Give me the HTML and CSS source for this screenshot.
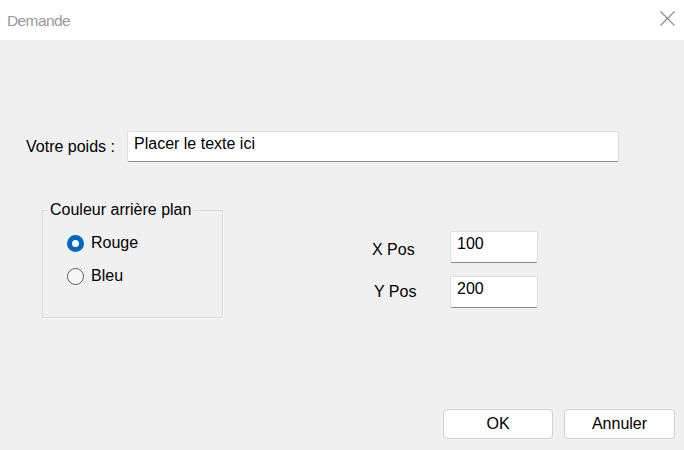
FILE: index.html
```html
<!DOCTYPE html>
<html lang="fr">
<head>
    <meta charset="UTF-8">
    <meta name="viewport" content="width=device-width, initial-scale=1.0">
    <title>Demande</title>
    <link rel="stylesheet" href="styles.css">
</head>
<body>
    <div class="titlebar">
        <span class="title">Demande</span>
        <svg class="close" width="15" height="15" viewBox="0 0 15 15">
            <path d="M0.5 0.5 L14.5 14.5 M14.5 0.5 L0.5 14.5" stroke="#8a8a8a" stroke-width="1.1" fill="none"/>
        </svg>
    </div>

    <div class="weight-row">
        <label for="poids" class="weight-label">Votre poids :</label>
        <input type="text" id="poids" class="textbox wide" value="Placer le texte ici">
    </div>

    <div class="options-row">
        <fieldset class="group">
            <legend>Couleur arrière plan</legend>
            <label class="radio-row">
                <input type="radio" name="couleur" value="rouge" checked>
                <span>Rouge</span>
            </label>
            <label class="radio-row">
                <input type="radio" name="couleur" value="bleu">
                <span>Bleu</span>
            </label>
        </fieldset>

        <div class="positions">
            <label for="xpos" class="pos-label x-label">X Pos</label>
            <input type="text" id="xpos" class="textbox small" value="100">
            <label for="ypos" class="pos-label y-label">Y Pos</label>
            <input type="text" id="ypos" class="textbox small" value="200">
        </div>
    </div>

    <div class="footer">
        <button class="btn ok">OK</button>
        <button class="btn cancel">Annuler</button>
    </div>
</body>
</html>
```

FILE: styles.css
```css
body {
    margin: 0;
    width: 684px;
    height: 450px;
    overflow: hidden;
    display: flex;
    flex-direction: column;
    background-color: #f0f0f0;
    color: #000;
    font-family: 'Liberation Sans', Arial, sans-serif;
    font-size: 16px;
}

.titlebar {
    height: 40px;
    flex-shrink: 0;
    display: flex;
    align-items: center;
    justify-content: space-between;
    padding: 0 9px 0 7px;
    background-color: #fff;
}

.title {
    color: #999;
    font-size: 15.5px;
    letter-spacing: -0.6px;
    margin-top: 1px;
}

.close {
    display: block;
    margin-top: -3px;
}

.textbox {
    box-sizing: border-box;
    margin: 0;
    padding: 0 6px 6px;
    border: 1px solid #dedede;
    border-bottom-color: #8a8a8a;
    border-radius: 2px;
    background-color: #fff;
    color: #000;
    font-family: inherit;
    font-size: 16px;
    outline: none;
}

.weight-row {
    display: flex;
    align-items: center;
    margin-top: 91px;
    padding-left: 26px;
}

.weight-label {
    width: 101px;
}

.textbox.wide {
    width: 492px;
    height: 31px;
}

.options-row {
    display: flex;
    align-items: flex-start;
    margin-top: 39px;
    padding-left: 42px;
}

.group {
    box-sizing: border-box;
    width: 181px;
    height: 117px;
    margin: 0;
    padding: 12px 0 0 5px;
    border: 1px solid #d9d9d9;
    box-shadow: 1px 1px 0 #fbfbfb;
}

.group legend {
    padding: 0 2px;
    line-height: 18px;
}

.radio-row {
    display: flex;
    align-items: center;
    gap: 7px;
    height: 24px;
    margin-left: 19px;
}

.radio-row + .radio-row {
    margin-top: 9px;
}

.radio-row input {
    appearance: none;
    box-sizing: border-box;
    width: 17px;
    height: 17px;
    margin: 0;
    border: 1px solid #5c5c5c;
    border-radius: 50%;
    background-color: #f6f6f6;
}

.radio-row input:checked {
    border: 5px solid #0067c0;
    background-color: #fff;
}

.positions {
    display: grid;
    grid-template-columns: 78px 88px;
    row-gap: 13px;
    align-items: center;
    margin-top: 30px;
    margin-left: 149px;
}

.x-label {
    padding-top: 5px;
}

.y-label {
    padding-left: 2px;
    padding-bottom: 1px;
}

.textbox.small {
    width: 88px;
    height: 32px;
}

.footer {
    margin-top: auto;
    display: flex;
    justify-content: flex-end;
    gap: 11px;
    padding: 0 9px 11px 0;
}

.btn {
    height: 30px;
    padding: 0;
    border: 1px solid #d0d0d0;
    border-radius: 4px;
    background-color: #fdfdfd;
    color: #000;
    font-family: inherit;
    font-size: 16px;
}

.btn.ok {
    width: 110px;
}

.btn.cancel {
    width: 111px;
}
```
